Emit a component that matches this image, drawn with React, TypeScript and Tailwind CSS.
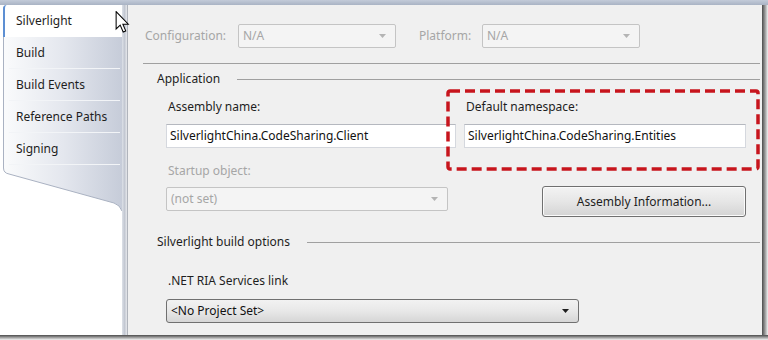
import React from "react";

const tabs = ["Build", "Build Events", "Reference Paths", "Signing"];

function Arrow({ color }: { color: string }) {
  return (
    <svg width="7" height="4" viewBox="0 0 7 4" className="shrink-0">
      <path d="M0 0 L7 0 L3.5 4 Z" fill={color} />
    </svg>
  );
}

function DisabledCombo({ text, className }: { text: string; className: string }) {
  return (
    <div className={`h-[24px] flex items-center justify-between pl-[4px] pr-[9px] border border-[#c4c4c4] rounded-[2px] bg-[#f4f4f4] text-[#a6a6a6] ${className}`}>
      <span>{text}</span>
      <Arrow color="#b4b4b4" />
    </div>
  );
}

function SectionHeader({ title }: { title: string }) {
  return (
    <div className="flex items-center h-[16px] pl-[29px] pr-[2px]">
      <span className="text-[#1e1e1e]">{title}</span>
      <div className="flex-1 ml-[17px] border-t border-[#a0a0a0]" />
    </div>
  );
}

function Cursor() {
  return (
    <svg width="15" height="22" viewBox="0 0 12 19" className="absolute left-[115px] top-[11px]">
      <path d="M0.5 0.5 L0.5 15.5 L4 12.2 L6.6 18.2 L8.8 17.2 L6.3 11.4 L11 11.4 Z" fill="#ffffff" stroke="#000000" strokeWidth="0.9" strokeLinejoin="miter" />
    </svg>
  );
}

function Sidebar() {
  return (
    <div className="w-[122px] bg-white flex flex-col">
      <div className="ml-[3px] rounded-tl-[4px] border-l border-[#aab2c2] bg-gradient-to-r from-[#fafbfc] via-[#e4e7ee] to-[#c6ccd9] flex flex-col">
        <div className="h-[32px] flex items-center pl-[11px] bg-white border-l-[2px] border-[#5d8fd3] -ml-px rounded-tl-[4px] text-[#1e1e1e] w-[125px]">
          Silverlight
        </div>
        {tabs.map((t, i) => (
          <div key={t} className="flex flex-col">
            {i > 0 && <div className="ml-[5px] mr-[2px] h-px bg-[#f2f4f7]" />}
            <div className="h-[31px] flex items-center pl-[12px] text-[#1e1e1e]">{t}</div>
          </div>
        ))}
        <div className="ml-[5px] mr-[2px] h-px bg-[#f2f4f7]" />
      </div>
      <svg width="122" height="46" viewBox="0 0 122 46" className="block">
        <defs>
          <linearGradient id="tg" x1="0" x2="1" y1="0" y2="0">
            <stop offset="0" stopColor="#fafbfc" />
            <stop offset="0.5" stopColor="#e4e7ee" />
            <stop offset="1" stopColor="#c6ccd9" />
          </linearGradient>
        </defs>
        <path d="M3 0 L3 3 Q3 8 9 9 L114 38 Q120 40 122 46 L122 0 Z" fill="url(#tg)" />
        <path d="M3.5 0 L3.5 3 Q3.5 8 9 9 L114 38 Q120 40 122 46" fill="none" stroke="#aab2c2" strokeWidth="1" />
      </svg>
    </div>
  );
}

export default function App() {
  return (
    <div className="relative w-[768px] h-[340px] overflow-hidden bg-white font-['Noto_Sans',sans-serif] text-[12px] leading-[16px]">
      <div className="h-[5px] bg-gradient-to-b from-[#c3cbd9] to-[#a9b3c4]" />
      <div className="flex h-[330px]">
        <Sidebar />
        <div className="w-[6px] bg-gradient-to-r from-[#dde1e8] via-[#c3c8d2] to-[#e6e8ec] border-r border-[#b0b4bc]" />
        <div className="flex-1 bg-[#f0f0f0] flex flex-col pt-[19px]">
          <div className="flex items-center h-[24px] pl-[17px]">
            <span className="text-[#a6a6a6] w-[93px]">Configuration:</span>
            <DisabledCombo text="N/A" className="w-[158px]" />
            <span className="text-[#a6a6a6] ml-[23px] w-[63px]">Platform:</span>
            <DisabledCombo text="N/A" className="w-[158px]" />
          </div>
          <div className="mt-[15px] ml-[15px] mr-[2px] border-t border-[#a0a0a0]" />
          <div className="mt-[7px]">
            <SectionHeader title="Application" />
          </div>
          <div className="relative flex pl-[38px] mt-[12px]">
            <div className="w-[290px] flex flex-col">
              <div className="h-[16px] pl-[2px] text-[#1e1e1e]">Assembly name:</div>
              <div className="mt-[9px] h-[24px] flex items-center pl-[3px] bg-white border border-[#d5d8de] border-t-[#b5b8bf] text-[#111]">
                SilverlightChina.CodeSharing.Client
              </div>
              <div className="mt-[15px] h-[16px] pl-[2px] text-[#a6a6a6]">Startup object:</div>
              <DisabledCombo text="(not set)" className="mt-[8px] w-[282px]" />
            </div>
            <div className="ml-[8px] w-[282px] flex flex-col">
              <div className="h-[16px] pl-[2px] text-[#1e1e1e]">Default namespace:</div>
              <div className="mt-[9px] h-[24px] flex items-center pl-[3px] bg-white border border-[#d5d8de] border-t-[#b5b8bf] text-[#111]">
                SilverlightChina.CodeSharing.Entities
              </div>
              <button className="self-end mt-[38px] w-[204px] h-[31px] rounded-[3px] border border-[#707070] bg-gradient-to-b from-[#f3f3f3] via-[#e6e6e6] to-[#d4d4d4] text-[#1e1e1e] shadow-[inset_0_0_0_1px_#fbfbfb]">
                Assembly Information...
              </button>
            </div>
            <svg width="314" height="82" viewBox="0 0 314 82" className="absolute left-[318px] top-[-10px]">
              <rect x="2" y="2" width="310" height="78" rx="2" fill="none" stroke="#c7151d" strokeWidth="3.5" strokeDasharray="10 5" />
            </svg>
          </div>
          <div className="mt-[17px]">
            <SectionHeader title="Silverlight build options" />
          </div>
          <div className="mt-[23px] pl-[40px] h-[16px] text-[#1e1e1e]">.NET RIA Services link</div>
          <div className="mt-[10px] ml-[38px] w-[413px] h-[24px] flex items-center justify-between pl-[4px] pr-[9px] rounded-[3px] border border-[#707070] bg-gradient-to-b from-[#f2f2f2] via-[#e8e8e8] to-[#d6d6d6] text-[#111]">
            <span>&lt;No Project Set&gt;</span>
            <Arrow color="#1e1e1e" />
          </div>
        </div>
        <div className="w-[6px] bg-gradient-to-r from-[#4c4c4c] via-[#9a9a9a] to-[#f4f4f4]" />
      </div>
      <div className="h-[5px] bg-gradient-to-b from-[#4c4c4c] via-[#a0a0a0] to-[#f4f4f4]" />
      <Cursor />
    </div>
  );
}
